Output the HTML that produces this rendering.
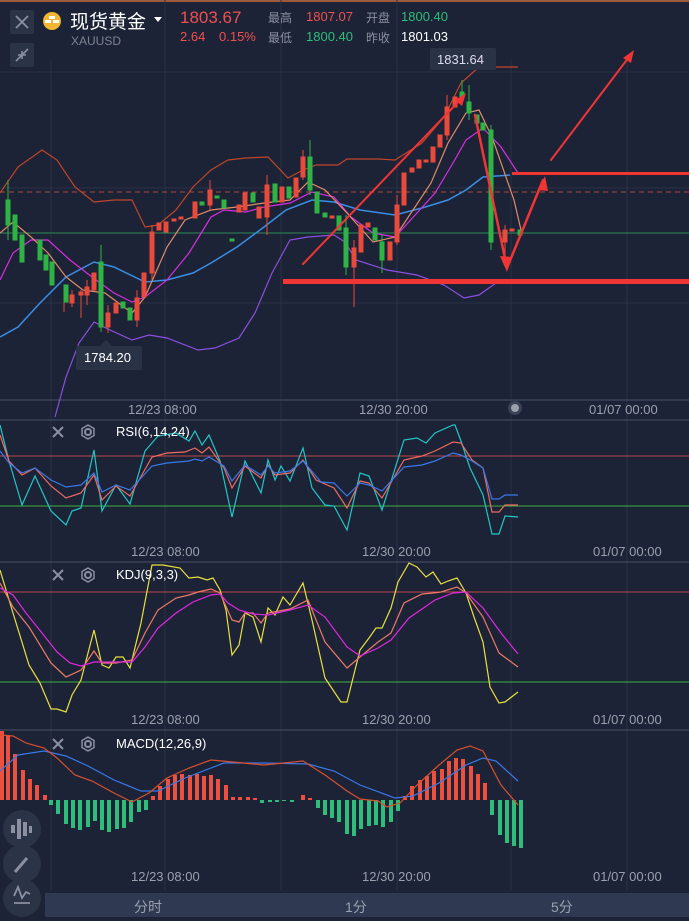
<!DOCTYPE html>
<html><head><meta charset="utf-8"><style>
html,body{margin:0;padding:0;background:#1c2336;width:689px;height:921px;overflow:hidden;font-family:"Liberation Sans","Noto Sans CJK SC",sans-serif;}
.a{position:absolute;white-space:nowrap;}
</style></head><body>
<div style="position:relative;width:689px;height:921px;background:#1c2336;">
<svg width="689" height="921" style="position:absolute;left:0;top:0" xmlns="http://www.w3.org/2000/svg">
<rect x="0" y="0" width="689" height="2" fill="#9b5a3a"/>
<!-- grid verticals -->
<g stroke="#2a3246" stroke-width="1">
<line x1="51" y1="60" x2="51" y2="890"/><line x1="165" y1="0" x2="165" y2="890"/><line x1="281" y1="0" x2="281" y2="890"/><line x1="397" y1="0" x2="397" y2="890"/><line x1="511" y1="60" x2="511" y2="890"/><line x1="627" y1="60" x2="627" y2="890"/>
<line x1="0" y1="72" x2="689" y2="72"/><line x1="0" y1="188" x2="689" y2="188"/><line x1="0" y1="303" x2="689" y2="303"/>
</g>
<g stroke="#3a4358" stroke-width="1.5"><line x1="0" y1="400" x2="689" y2="400"/><line x1="0" y1="420" x2="689" y2="420"/><line x1="0" y1="562" x2="689" y2="562"/><line x1="0" y1="730" x2="689" y2="730"/></g>
<!-- ref lines -->
<line x1="0" y1="192" x2="689" y2="192" stroke="#b04a35" stroke-dasharray="5,4" stroke-width="1"/>
<line x1="0" y1="233" x2="689" y2="233" stroke="#2e8a55" stroke-width="1"/>
<!-- bands -->
<g fill="none" stroke-width="1.2">
<polyline stroke="#c0452a" points="0,193 18,167 42,150 57,160 75,187 94,202 114,200 132,200 145,227 158,225 176,210 193,187 211,170 228,160 246,158 268,157 288,178 303,170 316,165 338,165 347,159 378,159 395,160 422,143 444,117 461,83 479,67 518,67"/>
<polyline stroke="#8a4fe0" points="55,417 66,377 79,343 94,322 110,330 132,340 149,335 167,338 198,350 215,348 239,338 255,313 272,273 290,240 308,237 334,235 345,242 356,260 387,270 417,275 444,285 464,298 479,295 496,283"/>
<polyline stroke="#3a8ee6" stroke-width="1.5" points="0,337 18,327 40,303 66,277 94,262 114,267 145,282 167,280 193,273 211,263 237,247 264,227 286,210 312,200 334,202 360,210 395,215 422,208 448,200 466,190 483,177 510,175"/>
<polyline stroke="#d82ee0" points="0,280 13,253 31,240 48,240 70,260 92,277 114,293 132,302 145,297 167,280 189,253 211,217 224,210 246,212 264,207 290,203 312,192 334,197 351,217 373,233 395,237 417,213 435,193 453,163 466,140 483,128 501,147 518,173"/>
<polyline stroke="#e08b6a" points="0,233 13,222 31,237 48,253 66,277 83,290 105,293 132,313 145,297 167,247 185,220 211,210 237,207 264,203 290,200 308,182 325,190 347,213 373,242 395,237 413,210 431,183 448,143 466,113 479,110 492,137 514,200 521,230"/>
</g>
<!-- candles -->
<g fill="#e84a3c" stroke="#e84a3c" stroke-width="1">
<line x1="64" y1="290" x2="64" y2="312"/><line x1="72" y1="290" x2="72" y2="307"/><line x1="81" y1="290" x2="81" y2="318"/><line x1="87" y1="280" x2="87" y2="305"/><line x1="108" y1="305" x2="108" y2="333"/><line x1="137" y1="290" x2="137" y2="327"/><line x1="152" y1="225" x2="152" y2="280"/><line x1="210" y1="180" x2="210" y2="210"/><line x1="267" y1="175" x2="267" y2="235"/><line x1="303" y1="150" x2="303" y2="180"/><line x1="354" y1="240" x2="354" y2="307"/><line x1="397" y1="195" x2="397" y2="245"/><line x1="447" y1="95" x2="447" y2="140"/><line x1="505" y1="225" x2="505" y2="258"/>
<rect x="70" y="295" width="4" height="8"/><rect x="79" y="292" width="4" height="3"/><rect x="85" y="287" width="4" height="8"/><rect x="92" y="273" width="4" height="17"/><rect x="106" y="313" width="4" height="14"/><rect x="114" y="303" width="4" height="10"/><rect x="135" y="298" width="4" height="22"/><rect x="142" y="273" width="4" height="24"/><rect x="150" y="232" width="4" height="41"/><rect x="157" y="223" width="4" height="7"/><rect x="164" y="222" width="4" height="10"/><rect x="172" y="219" width="4" height="2"/><rect x="179" y="217" width="4" height="2"/><rect x="193" y="202" width="4" height="16"/><rect x="208" y="190" width="4" height="15"/><rect x="237" y="205" width="4" height="7"/><rect x="243" y="193" width="4" height="17"/><rect x="257" y="207" width="4" height="11"/><rect x="265" y="185" width="4" height="32"/><rect x="280" y="187" width="4" height="15"/><rect x="294" y="178" width="4" height="19"/><rect x="301" y="157" width="4" height="20"/><rect x="330" y="216" width="4" height="2"/><rect x="352" y="248" width="4" height="19"/><rect x="359" y="225" width="4" height="27"/><rect x="366" y="223" width="4" height="4"/><rect x="388" y="242" width="4" height="18"/><rect x="395" y="205" width="4" height="37"/><rect x="402" y="173" width="4" height="32"/><rect x="410" y="168" width="4" height="4"/><rect x="417" y="160" width="4" height="8"/><rect x="424" y="160" width="4" height="2"/><rect x="431" y="147" width="4" height="15"/><rect x="438" y="135" width="4" height="12"/><rect x="445" y="107" width="4" height="28"/><rect x="453" y="97" width="4" height="10"/><rect x="503" y="230" width="4" height="12"/><rect x="510" y="229" width="4" height="2"/>
</g>
<g fill="#2fb344" stroke="#2fb344" stroke-width="1">
<line x1="8" y1="180" x2="8" y2="240"/><line x1="101" y1="245" x2="101" y2="332"/><line x1="310" y1="140" x2="310" y2="195"/><line x1="346" y1="215" x2="346" y2="275"/><line x1="462" y1="80" x2="462" y2="100"/><line x1="469" y1="85" x2="469" y2="120"/><line x1="491" y1="125" x2="491" y2="250"/><line x1="382" y1="235" x2="382" y2="273"/>
<rect x="6" y="200" width="4" height="25"/><rect x="13" y="215" width="4" height="25"/><rect x="20" y="235" width="4" height="27"/><rect x="38" y="240" width="4" height="20"/><rect x="44" y="255" width="4" height="15"/><rect x="50" y="262" width="4" height="23"/><rect x="64" y="285" width="4" height="17"/><rect x="99" y="262" width="4" height="65"/><rect x="121" y="302" width="4" height="6"/><rect x="128" y="308" width="4" height="12"/><rect x="200" y="202" width="4" height="3"/><rect x="215" y="196" width="4" height="2"/><rect x="222" y="200" width="4" height="8"/><rect x="230" y="239" width="4" height="2"/><rect x="251" y="193" width="4" height="9"/><rect x="273" y="184" width="4" height="18"/><rect x="287" y="187" width="4" height="11"/><rect x="308" y="157" width="4" height="33"/><rect x="315" y="192" width="4" height="21"/><rect x="323" y="213" width="4" height="4"/><rect x="337" y="216" width="4" height="14"/><rect x="344" y="228" width="4" height="39"/><rect x="373" y="228" width="4" height="12"/><rect x="380" y="242" width="4" height="18"/><rect x="460" y="92" width="4" height="6"/><rect x="467" y="102" width="4" height="11"/><rect x="475" y="115" width="4" height="8"/><rect x="481" y="123" width="4" height="7"/><rect x="489" y="130" width="4" height="112"/><rect x="518" y="230" width="4" height="5"/>
</g>
<!-- annotations -->
<g stroke="#f03535" fill="none" stroke-linecap="round">
<rect x="283" y="279" width="406" height="5" fill="#f03535" stroke="none"/>
<rect x="512" y="172" width="177" height="3" fill="#f03535" stroke="none"/>
<line x1="303" y1="264" x2="463" y2="97" stroke-width="2"/>
<line x1="475" y1="115" x2="507" y2="268" stroke-width="2.5"/>
<line x1="507" y1="268" x2="543" y2="180" stroke-width="2.5"/>
<line x1="551" y1="160" x2="632" y2="53" stroke-width="2"/>
</g>
<g fill="#f03535"><polygon points="466,93 455,100 462,106"/><polygon points="507,272 500,256 512,257"/><polygon points="545,176 538,190 548,191"/><polygon points="634,50 623,58 631,63"/></g>
<!-- labels -->
<rect x="430" y="48" width="66" height="22" rx="2" fill="#2a3346"/>
<rect x="76" y="346" width="66" height="24" rx="2" fill="#2a3346"/>
<polygon points="100,346 106,340 112,346" fill="#2a3346"/>
<circle cx="515" cy="408" r="7" fill="#3a4256"/><circle cx="515" cy="408" r="4" fill="#9aa0ad"/>
<!-- RSI -->
<line x1="0" y1="456" x2="689" y2="456" stroke="#c0454a" stroke-width="1"/>
<line x1="0" y1="506" x2="689" y2="506" stroke="#3cb043" stroke-width="1"/>
<g fill="none" stroke-width="1.2">
<polyline stroke="#22c6c6" points="0,425 9,461 22,505 35,476 51,511 66,525 72,511 81,508 94,450 102,511 116,485 130,504 145,451 158,436 176,433 189,441 195,431 202,445 209,435 220,461 232,517 245,461 261,493 268,460 275,480 281,466 290,481 303,448 312,488 325,505 334,506 347,530 360,473 369,476 382,510 404,440 417,438 426,443 435,433 453,425 455,425 461,441 470,468 483,495 492,534 499,534 505,516 518,517"/>
<polyline stroke="#ee6a60" points="0,435 9,461 22,475 35,468 51,486 66,498 81,493 94,475 102,500 116,486 130,496 152,457 167,453 185,452 195,448 202,453 209,447 224,468 232,488 245,466 261,478 268,465 275,475 290,473 303,460 316,480 334,488 347,508 360,481 369,483 382,498 404,460 422,456 435,451 453,442 461,443 472,460 483,468 492,512 499,512 505,505 518,505"/>
<polyline stroke="#3a78e8" points="0,451 9,463 22,473 35,468 51,480 66,487 81,485 94,473 102,492 116,485 130,490 152,466 167,463 189,461 195,459 202,461 209,457 224,466 232,481 245,465 261,475 268,466 275,473 290,471 303,461 321,482 334,483 347,496 360,483 369,485 382,491 404,467 422,465 435,461 453,453 461,455 472,461 483,468 492,499 499,499 505,495 518,495"/>
</g>
<!-- KDJ -->
<line x1="0" y1="592" x2="689" y2="592" stroke="#c0454a" stroke-width="1"/>
<line x1="0" y1="682" x2="689" y2="682" stroke="#3cb043" stroke-width="1"/>
<g fill="none" stroke-width="1.2">
<polyline stroke="#e8e040" points="0,570 13,613 29,665 40,683 51,709 57,709 66,712 72,695 81,680 94,630 102,665 109,668 116,657 123,657 130,668 141,623 152,565 163,565 180,568 189,578 198,577 207,580 213,578 220,590 226,610 232,655 239,645 245,613 253,617 261,642 268,608 275,615 283,597 290,605 303,583 312,620 325,678 341,702 347,702 360,650 369,638 376,628 382,628 391,608 398,582 409,563 417,567 426,577 433,572 441,584 448,581 457,578 466,593 474,617 483,642 490,687 499,703 505,702 518,692"/>
<polyline stroke="#ee7a68" points="0,583 13,607 29,627 51,663 66,677 81,670 94,651 102,663 116,663 132,660 145,633 158,610 176,598 189,595 198,592 211,589 220,593 232,620 239,622 245,613 253,613 261,623 268,613 290,609 308,600 325,642 347,668 360,657 378,642 391,633 404,603 422,594 433,593 441,592 457,587 466,593 483,617 499,653 518,667"/>
<polyline stroke="#e028e0" points="0,588 13,595 26,613 42,633 57,652 70,663 81,666 94,662 110,662 132,662 145,647 158,628 176,613 193,602 211,595 220,594 228,603 239,610 253,614 268,615 290,610 308,605 325,617 347,647 360,656 378,648 391,640 409,618 435,600 453,593 466,592 483,608 501,633 518,654"/>
</g>
<!-- MACD -->
<g fill="#ee5040">
<rect x="0" y="731" width="4" height="69"/><rect x="6" y="736" width="4" height="64"/><rect x="13" y="754" width="4" height="46"/><rect x="21" y="770" width="4" height="30"/><rect x="28" y="779" width="4" height="21"/><rect x="35" y="785" width="4" height="15"/><rect x="43" y="795" width="4" height="5"/>
<rect x="151" y="796" width="4" height="4"/><rect x="158" y="786" width="4" height="14"/><rect x="166" y="779" width="4" height="21"/><rect x="173" y="775" width="4" height="25"/><rect x="180" y="774" width="4" height="26"/><rect x="188" y="775" width="4" height="25"/><rect x="195" y="774" width="4" height="26"/><rect x="202" y="776" width="4" height="24"/><rect x="209" y="775" width="4" height="25"/><rect x="216" y="779" width="4" height="21"/><rect x="224" y="785" width="4" height="15"/><rect x="231" y="797" width="4" height="3"/><rect x="238" y="797" width="4" height="3"/><rect x="246" y="797" width="4" height="3"/><rect x="253" y="798" width="4" height="2"/><rect x="301" y="795" width="4" height="5"/><rect x="308" y="798" width="4" height="2"/>
<rect x="403" y="796" width="4" height="4"/><rect x="410" y="786" width="4" height="14"/><rect x="418" y="780" width="4" height="20"/><rect x="425" y="776" width="4" height="24"/><rect x="432" y="771" width="4" height="29"/><rect x="440" y="769" width="4" height="31"/><rect x="447" y="761" width="4" height="39"/><rect x="454" y="758" width="4" height="42"/><rect x="461" y="759" width="4" height="41"/><rect x="469" y="766" width="4" height="34"/><rect x="476" y="774" width="4" height="26"/><rect x="483" y="783" width="4" height="17"/>
</g>
<g fill="#2ebd7a">
<rect x="49" y="800" width="4" height="5"/><rect x="56" y="800" width="4" height="14"/><rect x="64" y="800" width="4" height="24"/><rect x="71" y="800" width="4" height="28"/><rect x="78" y="800" width="4" height="30"/><rect x="86" y="800" width="4" height="27"/><rect x="93" y="800" width="4" height="21"/><rect x="100" y="800" width="4" height="30"/><rect x="107" y="800" width="4" height="32"/><rect x="115" y="800" width="4" height="29"/><rect x="122" y="800" width="4" height="28"/><rect x="129" y="800" width="4" height="22"/><rect x="137" y="800" width="4" height="12"/><rect x="144" y="800" width="4" height="10"/>
<rect x="260" y="800" width="4" height="3"/><rect x="268" y="800" width="4" height="2"/><rect x="275" y="800" width="4" height="2"/><rect x="282" y="800" width="4" height="1"/><rect x="290" y="800" width="4" height="2"/>
<rect x="316" y="800" width="4" height="8"/><rect x="323" y="800" width="4" height="15"/><rect x="330" y="800" width="4" height="18"/><rect x="337" y="800" width="4" height="22"/><rect x="345" y="800" width="4" height="34"/><rect x="352" y="800" width="4" height="36"/><rect x="359" y="800" width="4" height="29"/><rect x="367" y="800" width="4" height="26"/><rect x="374" y="800" width="4" height="25"/><rect x="381" y="800" width="4" height="27"/><rect x="389" y="800" width="4" height="22"/><rect x="396" y="800" width="4" height="11"/>
<rect x="490" y="800" width="4" height="15"/><rect x="498" y="800" width="4" height="35"/><rect x="505" y="800" width="4" height="43"/><rect x="512" y="800" width="4" height="46"/><rect x="519" y="800" width="4" height="48"/>
</g>
<g fill="none" stroke-width="1.2">
<polyline stroke="#3a78e8" points="0,771 18,755 44,751 66,756 88,766 114,780 141,791 158,791 185,778 224,763 264,763 308,764 334,771 360,785 395,798 413,796 439,783 466,765 483,758 496,761 518,781"/>
<polyline stroke="#d8502e" points="0,735 13,736 26,743 44,748 57,758 75,775 92,781 114,793 132,802 149,793 167,778 189,768 211,760 233,762 264,765 303,761 325,775 347,791 360,799 378,801 387,807 400,803 417,785 439,765 457,750 470,746 483,751 501,785 518,805"/>
</g>
<!-- panel header icons -->
<g stroke="#8a90a0" stroke-width="2" fill="none">
<path d="M53 427 L63 437 M63 427 L53 437"/><circle cx="88" cy="432" r="3"/><polygon points="88,425 94,428.5 94,435.5 88,439 82,435.5 82,428.5" stroke-width="1.5"/>
<path d="M53 570 L63 580 M63 570 L53 580"/><circle cx="88" cy="575" r="3"/><polygon points="88,568 94,571.5 94,578.5 88,582 82,578.5 82,571.5" stroke-width="1.5"/>
<path d="M53 739 L63 749 M63 739 L53 749"/><circle cx="88" cy="744" r="3"/><polygon points="88,737 94,740.5 94,747.5 88,751 82,747.5 82,740.5" stroke-width="1.5"/>
</g>
<!-- bottom -->
<rect x="45" y="893" width="644" height="24" fill="#2f3a52"/>
<circle cx="22" cy="829" r="19" fill="#2b3447"/><circle cx="22" cy="864" r="19" fill="#2b3447"/><circle cx="22" cy="898" r="19" fill="#2b3447"/>
<g fill="#8a90a0"><rect x="11" y="825" width="4" height="8"/><rect x="17" y="819" width="4" height="20"/><rect x="23" y="822" width="4" height="14"/><rect x="29" y="826" width="3" height="7"/></g>
<path d="M15 872 L27 858" stroke="#8a90a0" stroke-width="3"/>
<path d="M14 896 L18 887 L22 898 L26 892 L30 894 M14 903 L30 903" stroke="#8a90a0" stroke-width="1.8" fill="none"/>
<!-- header -->
<rect x="10" y="10" width="24" height="24" rx="2" fill="#2b3447"/>
<path d="M16 16 L28 28 M28 16 L16 28" stroke="#8a90a0" stroke-width="1.8"/>
<rect x="10" y="43" width="24" height="24" rx="2" fill="#2b3447"/>
<path d="M16 61 L21 56 M18 55 L22 55 L22 59 M28 49 L23 54 M26 55 L22 55 L22 51" stroke="#8a90a0" stroke-width="1.6" fill="none"/>
<circle cx="52" cy="21" r="9" fill="#f2b631"/>
<g fill="#fff"><rect x="49" y="16" width="6" height="3"/><rect x="45" y="20" width="6" height="3"/><rect x="53" y="20" width="6" height="3"/></g>
<polygon points="154,17 162,17 158,22" fill="#fff"/>
</svg>
<div class="a" style="left:70px;top:7px;font-size:19px;color:#fff;">现货黄金</div>
<div class="a" style="left:71px;top:34px;font-size:12px;color:#7d8392;">XAUUSD</div>
<div class="a" style="left:180px;top:8px;font-size:17px;color:#f05050;">1803.67</div>
<div class="a" style="left:180px;top:29px;font-size:13px;color:#f05050;">2.64</div>
<div class="a" style="left:219px;top:29px;font-size:13px;color:#f05050;">0.15%</div>
<div class="a" style="left:268px;top:9px;font-size:12px;color:#8a90a0;">最高</div>
<div class="a" style="left:306px;top:9px;font-size:13px;color:#f05050;">1807.07</div>
<div class="a" style="left:366px;top:9px;font-size:12px;color:#8a90a0;">开盘</div>
<div class="a" style="left:401px;top:9px;font-size:13px;color:#2ebd7a;">1800.40</div>
<div class="a" style="left:268px;top:29px;font-size:12px;color:#8a90a0;">最低</div>
<div class="a" style="left:306px;top:29px;font-size:13px;color:#2ebd7a;">1800.40</div>
<div class="a" style="left:366px;top:29px;font-size:12px;color:#8a90a0;">昨收</div>
<div class="a" style="left:401px;top:29px;font-size:13px;color:#fff;">1801.03</div>
<div class="a" style="left:437px;top:52px;font-size:13px;color:#dde;">1831.64</div>
<div class="a" style="left:84px;top:350px;font-size:13px;color:#fff;">1784.20</div>
<div class="a" style="left:128px;top:402px;font-size:13px;color:#9aa0ad;">12/23 08:00</div>
<div class="a" style="left:359px;top:402px;font-size:13px;color:#9aa0ad;">12/30 20:00</div>
<div class="a" style="left:589px;top:402px;font-size:13px;color:#9aa0ad;">01/07 00:00</div>
<div class="a" style="left:116px;top:424px;font-size:13px;color:#fff;">RSI(6,14,24)</div>
<div class="a" style="left:131px;top:544px;font-size:13px;color:#9aa0ad;">12/23 08:00</div>
<div class="a" style="left:362px;top:544px;font-size:13px;color:#9aa0ad;">12/30 20:00</div>
<div class="a" style="left:593px;top:544px;font-size:13px;color:#9aa0ad;">01/07 00:00</div>
<div class="a" style="left:116px;top:567px;font-size:13px;color:#fff;">KDJ(9,3,3)</div>
<div class="a" style="left:131px;top:712px;font-size:13px;color:#9aa0ad;">12/23 08:00</div>
<div class="a" style="left:362px;top:712px;font-size:13px;color:#9aa0ad;">12/30 20:00</div>
<div class="a" style="left:593px;top:712px;font-size:13px;color:#9aa0ad;">01/07 00:00</div>
<div class="a" style="left:116px;top:736px;font-size:13px;color:#fff;">MACD(12,26,9)</div>
<div class="a" style="left:131px;top:869px;font-size:13px;color:#9aa0ad;">12/23 08:00</div>
<div class="a" style="left:362px;top:869px;font-size:13px;color:#9aa0ad;">12/30 20:00</div>
<div class="a" style="left:593px;top:869px;font-size:13px;color:#9aa0ad;">01/07 00:00</div>
<div class="a" style="left:134px;top:897px;font-size:14px;color:#9aa0ad;">分时</div>
<div class="a" style="left:345px;top:897px;font-size:14px;color:#9aa0ad;">1分</div>
<div class="a" style="left:551px;top:897px;font-size:14px;color:#9aa0ad;">5分</div>
</div>
</body></html>
